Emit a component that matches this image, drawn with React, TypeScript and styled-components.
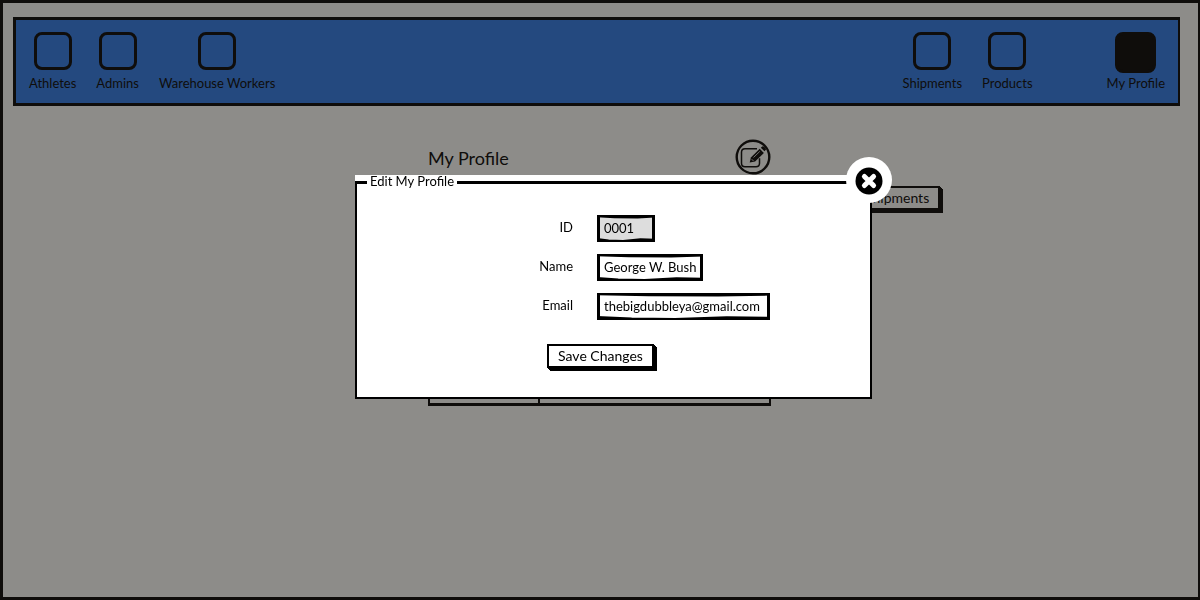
import React from "react";
import styled, { createGlobalStyle } from "styled-components";

const ink = "#0f0d0b";

const GlobalStyle = createGlobalStyle`
  * { box-sizing: border-box; }
  body { margin: 0; background: #8d8c89; }
  body, button, input { font-family: Lato, "Open Sans", sans-serif; font-size: 13px; line-height: 16px; }
`;

const Page = styled.div`
  min-height: 100vh;
  padding: 14px 18px 14px 10px;
  border: 3px solid ${ink};
  border-width: 3px 2px 3px 3px;
  color: ${ink};
`;

const NavBar = styled.nav`
  display: flex;
  justify-content: space-between;
  height: 89px;
  padding: 12px 13px;
  border: 3px solid ${ink};
  border-width: 3px 2px 3px 3px;
  background: #24497f;
`;

const NavGroup = styled.div<{ $gap: number }>`
  display: flex;
  gap: ${(p) => p.$gap}px;
`;

const NavLink = styled.a`
  display: flex;
  flex-direction: column;
  align-items: center;
  justify-content: space-between;
  height: 59px;
  color: inherit;
  text-decoration: none;
  white-space: nowrap;
`;

const NavIcon = styled.span<{ $active?: boolean }>`
  width: ${(p) => (p.$active ? 41 : 38)}px;
  height: ${(p) => (p.$active ? 41 : 38)}px;
  border: 3px solid ${ink};
  border-radius: 8px;
  background: ${(p) => (p.$active ? ink : "transparent")};
`;

const Content = styled.main`
  display: grid;
  grid-template-columns: 1fr 343px 1fr;
  padding: 33px 0 0 6px;
`;

const Profile = styled.section`
  grid-column: 2;
`;

const ProfileHeader = styled.header`
  display: flex;
  align-items: center;
  justify-content: space-between;
  height: 36px;
`;

const Title = styled.h1`
  margin: 0;
  padding-top: 2px;
  font-size: 18px;
  line-height: 24px;
  font-weight: 400;
`;

const EditButton = styled.button`
  display: flex;
  padding: 0;
  border: 0;
  background: none;
  color: ${ink};
`;

const Details = styled.div`
  display: grid;
  grid-template-columns: 110px 1fr;
  height: 206px;
  margin-top: 25px;
  border: 2px solid ${ink};
  border-bottom-width: 3px;
`;

const DetailLabels = styled.div`
  border-right: 2px solid ${ink};
`;

const SketchButton = styled.button<{ $ink: string; $fill: string }>`
  height: 24px;
  padding: 0 9px;
  border: 2px solid ${(p) => p.$ink};
  background: ${(p) => p.$fill};
  color: ${(p) => p.$ink};
  box-shadow: 1px 1px 0 ${(p) => p.$ink}, 2px 2px 0 ${(p) => p.$ink}, 3px 3px 0 ${(p) => p.$ink};
  font-size: 14px;
  white-space: nowrap;
`;

const Aside = styled.div`
  padding: 47px 0 0 83px;
`;

const Overlay = styled.div`
  position: fixed;
  inset: 0;
  display: flex;
  justify-content: center;
  align-items: flex-start;
  padding: 175px 0 0 27px;
`;

const Dialog = styled.form`
  position: relative;
  width: 517px;
  background: #fff;
  color: #000;
`;

const Fieldset = styled.fieldset`
  display: flex;
  flex-direction: column;
  align-items: center;
  margin: 0;
  padding: 26px 0 29px;
  border: 2px solid #000;
  border-top-width: 3px;
`;

const Legend = styled.legend`
  margin-left: 10px;
  padding: 0 3px 2px;
  line-height: 12px;
`;

const Fields = styled.div`
  display: grid;
  grid-template-columns: 216px 1fr;
  align-self: stretch;
  gap: 12px 24px;
  margin-bottom: 24px;
`;

const Label = styled.label`
  text-align: right;
  line-height: 25px;
`;

const Field = styled.div<{ $width: number }>`
  position: relative;
  width: ${(p) => p.$width}px;
  height: 27px;
`;

const Input = styled.input`
  display: block;
  width: 100%;
  height: 100%;
  padding: 0 4px 2px;
  border: 2px solid #000;
  border-width: 2px 3px;
  border-radius: 0;
  background: #fff;
  color: #000;
  outline: 0;

  &:read-only { background: #ddd; }
`;

const Strokes = styled.svg`
  position: absolute;
  inset: 0;
  width: 100%;
  height: 100%;
  pointer-events: none;
`;

const Actions = styled.div`
  padding-right: 26px;
`;

const CloseButton = styled.button`
  position: absolute;
  top: -18px;
  right: -20px;
  display: flex;
  align-items: center;
  justify-content: center;
  width: 46px;
  height: 46px;
  padding: 2px 0 0;
  border: 0;
  border-radius: 50%;
  background: #fff;
`;

const EditIcon = () => (
  <svg width="36" height="36" viewBox="0 0 36 36" fill="none" stroke="currentColor">
    <circle cx="18" cy="18" r="16.3" strokeWidth="2.4" />
    <path d="M22 9.7H10q-3.5 0-3.5 3.5v11q0 3.5 3.5 3.5h11q3.5 0 3.5-3.5v-5" strokeWidth="1.5" />
    <path d="M14.7 23.6l1.2-5.2 8.8-8.6 4.2 4.1-8.8 8.5z" fill="currentColor" stroke="none" />
    <path d="M25.8 8.8l1.4-1.2q1-.7 1.9.2l1.5 1.5q.8.9 0 1.8l-1.1 1.2z" fill="currentColor" stroke="none" />
    <path d="M18.5 18.5l6.3-6.1M16.7 20.2l1.8 1.8" stroke="#8d8c89" strokeWidth=".8" />
  </svg>
);

const CloseIcon = () => (
  <svg width="28" height="28" viewBox="0 0 28 28">
    <circle cx="14" cy="14" r="13.5" fill="#000" />
    <path d="M9.4 9.4l9.2 9.2M18.6 9.4l-9.2 9.2" stroke="#fff" strokeWidth="5" strokeLinecap="round" />
  </svg>
);

// Uneven pen strokes that thicken the field's straight top and bottom border.
const PenStrokes = () => (
  <Strokes viewBox="0 0 100 100" preserveAspectRatio="none">
    <path
      d="M0 5L30 8 70 9 100 6M100 92L75 90 45 96 20 94 0 89"
      fill="none"
      stroke="#000"
      strokeWidth="2"
      vectorEffect="non-scaling-stroke"
    />
  </Strokes>
);

const NavItem = ({ label, active }: { label: string; active?: boolean }) => (
  <NavLink href="#" aria-current={active ? "page" : undefined}>
    <NavIcon $active={active} />
    {label}
  </NavLink>
);

const fields = [
  { id: "id", label: "ID", value: "0001", width: 58, readOnly: true },
  { id: "name", label: "Name", value: "George W. Bush", width: 106 },
  { id: "email", label: "Email", value: "thebigdubbleya@gmail.com", width: 173 },
];

export default function App() {
  return (
    <>
      <GlobalStyle />
      <Page>
        <NavBar>
          <NavGroup $gap={20}>
            <NavItem label="Athletes" />
            <NavItem label="Admins" />
            <NavItem label="Warehouse Workers" />
          </NavGroup>
          <NavGroup $gap={74}>
            <NavGroup $gap={20}>
              <NavItem label="Shipments" />
              <NavItem label="Products" />
            </NavGroup>
            <NavItem label="My Profile" active />
          </NavGroup>
        </NavBar>
        <Content>
          <Profile>
            <ProfileHeader>
              <Title>My Profile</Title>
              <EditButton aria-label="Edit profile">
                <EditIcon />
              </EditButton>
            </ProfileHeader>
            <Details>
              <DetailLabels />
            </Details>
          </Profile>
          <Aside>
            <SketchButton $ink={ink} $fill="#8d8c89">Shipments</SketchButton>
          </Aside>
        </Content>
      </Page>
      <Overlay>
        <Dialog role="dialog" aria-modal="true" onSubmit={(e) => e.preventDefault()}>
          <Fieldset>
            <Legend>Edit My Profile</Legend>
            <Fields>
              {fields.map((f) => (
                <React.Fragment key={f.id}>
                  <Label htmlFor={f.id}>{f.label}</Label>
                  <Field $width={f.width}>
                    <Input id={f.id} defaultValue={f.value} readOnly={f.readOnly} />
                    <PenStrokes />
                  </Field>
                </React.Fragment>
              ))}
            </Fields>
            <Actions>
              <SketchButton $ink="#000" $fill="#fff">Save Changes</SketchButton>
            </Actions>
          </Fieldset>
          <CloseButton type="button" aria-label="Close">
            <CloseIcon />
          </CloseButton>
        </Dialog>
      </Overlay>
    </>
  );
}
